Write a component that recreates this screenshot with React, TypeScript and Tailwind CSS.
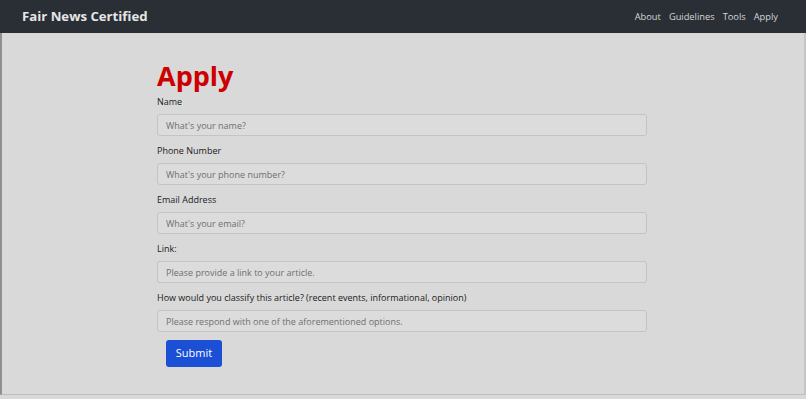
import React from "react";

const fields = [
  { label: "Name", ph: "What's your name?" },
  { label: "Phone Number", ph: "What's your phone number?" },
  { label: "Email Address", ph: "What's your email?" },
  { label: "Link:", ph: "Please provide a link to your article." },
  {
    label: "How would you classify this article? (recent events, informational, opinion)",
    ph: "Please respond with one of the aforementioned options.",
  },
];

export default function App() {
  return (
    <div className="w-[806px] h-[399px] bg-[#d9d9d9] overflow-hidden" style={{ fontFamily: '"Open Sans", "Noto Sans", sans-serif' }}>
      <nav className="h-[33px] bg-[#2a2f35] flex items-center justify-between pl-[22px] pr-[28px]">
        <span className="text-[#e6e6e6] text-[13.2px] font-bold">Fair News Certified</span>
        <div className="flex gap-[8px] text-[9.3px] text-[#d6d6d6]">
          <span>About</span>
          <span>Guidelines</span>
          <span>Tools</span>
          <span>Apply</span>
        </div>
      </nav>
      <div className="h-[362px] border-l-2 border-r-2 border-b border-l-[#8f8f8f] border-r-[#c4c4c4] border-b-[#bdbdbd] bg-[#d9d9d9]">
        <div className="w-[490px] ml-[155px] pt-[25px]">
          <h1 className="text-[#cc0000] text-[27px] font-bold leading-[36px] mb-[2px]">Apply</h1>
          <form className="flex flex-col" onSubmit={(e) => e.preventDefault()}>
            {fields.map((f, i) => (
              <div key={i} className="flex flex-col mb-[9px]">
                <label className="text-[9px] text-[#1a1a1a] leading-[12px] mb-[6px]">{f.label}</label>
                <input
                  className="h-[22px] w-full rounded-[3px] border border-[#c4c4c4] bg-[#dcdcdc] px-[8px] text-[9px] placeholder:text-[#6f6f6f] outline-none"
                  placeholder={f.ph}
                />
              </div>
            ))}
            <div className="pl-[9px] -mt-[2px]">
              <button className="h-[27px] w-[56px] rounded-[3px] bg-[#1a4fd6] text-white text-[11px]">Submit</button>
            </div>
          </form>
        </div>
      </div>
    </div>
  );
}
